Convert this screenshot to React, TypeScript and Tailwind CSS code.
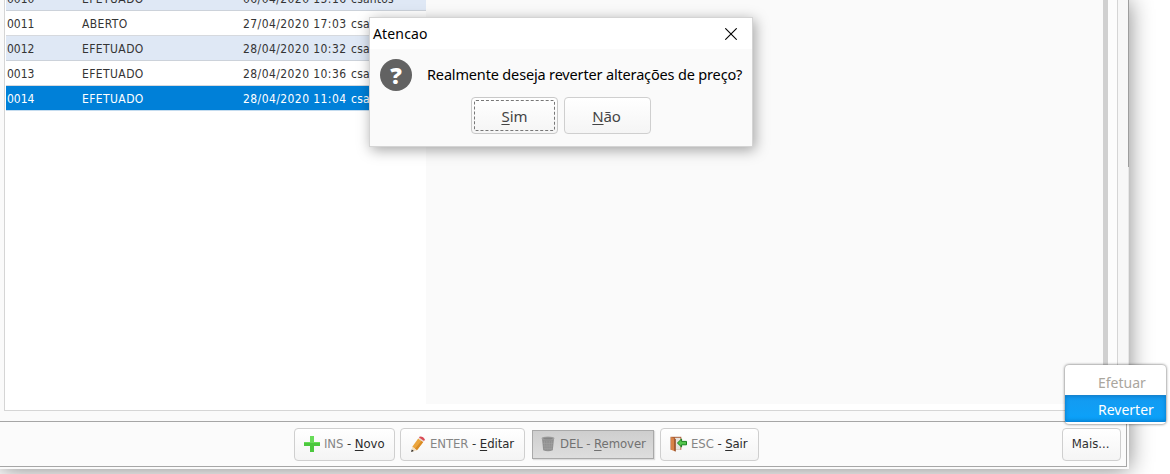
import type { ReactNode } from 'react';

type Row = { id: string; status: string; date: string; user: string };

const rows: Row[] = [
  { id: '0010', status: 'EFETUADO', date: '06/04/2020 15:16', user: 'csantos' },
  { id: '0011', status: 'ABERTO', date: '27/04/2020 17:03', user: 'csantos' },
  { id: '0012', status: 'EFETUADO', date: '28/04/2020 10:32', user: 'csantos' },
  { id: '0013', status: 'EFETUADO', date: '28/04/2020 10:36', user: 'csantos' },
  { id: '0014', status: 'EFETUADO', date: '28/04/2020 11:04', user: 'csantos' },
];

function PriceTable() {
  return (
    <div className="-mt-[14px] w-[421px] shrink-0 pl-px font-['DejaVu_Sans_Condensed','DejaVu_Sans',sans-serif] text-[12px] text-[#343434]">
      {rows.map((row, i) => {
        const selected = i === rows.length - 1;
        const tone = selected
          ? 'bg-[#0080d8] text-white border-[#c5dcef]'
          : i % 2 === 0
            ? 'bg-[#dfe8f5] border-[#ccd2da]'
            : 'bg-white border-[#d6d9de]';
        return (
          <div key={row.id} className={`flex h-[25px] items-center whitespace-nowrap border-b pt-px ${tone}`}>
            <span className="w-[76px] pl-px">{row.id}</span>
            <span className="w-[161px] tracking-[0.4px]">{row.status}</span>
            <span className="w-[108px] tracking-[0.42px]">{row.date}</span>
            <span className="tracking-[0.2px]">{row.user}</span>
          </div>
        );
      })}
    </div>
  );
}

function PlusIcon() {
  return (
    <svg width="16" height="16" viewBox="0 0 16 16">
      <path d="M6 0h4v6h6v4h-6v6H6v-6H0V6h6z" fill="#4cc83e" />
      <path d="M6 0h4v6h6v1H0V6h6z" fill="#68dc59" />
    </svg>
  );
}

function PencilIcon() {
  return (
    <svg width="16" height="16" viewBox="0 0 16 16">
      <path d="M2.3 10.8 8.2 2.4l5 3.6-6.3 8.2z" fill="#eba53c" />
      <path d="m5 12.7 6.6-8 1.6 1.3-6.3 8.2z" fill="#d98b25" />
      <path d="m8.2 2.4.8-1 5 3.6-.8 1z" fill="#ead9d0" />
      <path d="M9 1.4 9.8.4Q13.6.2 15 3.8L14 5z" fill="#d94b55" />
      <path d="m2.3 10.8 4.6 3.4L1.2 16z" fill="#f3dfc0" />
      <path d="m1.7 13.4 2.2 1.6-2.7 1z" fill="#252525" />
    </svg>
  );
}

function TrashIcon() {
  return (
    <svg width="14" height="16" viewBox="0 0 14 16">
      <path d="M1 2.5h12l-1.2 11.8Q7 16.4 2.2 14.3z" fill="#8f8f8f" />
      <path d="M3.3 4.5 4.2 14M5.8 5l.4 9.5M8.3 5 8 14.5M10.8 4.5 9.9 14M2 7.4h10M2.2 10h9.6M2.5 12.4h9" stroke="#a2a2a2" strokeWidth=".6" fill="none" />
      <ellipse cx="7" cy="2.4" rx="6.5" ry="1.9" fill="#a0a0a0" />
      <ellipse cx="7" cy="2.5" rx="4.7" ry="1" fill="#858585" />
    </svg>
  );
}

function ExitIcon() {
  return (
    <svg width="17" height="16" viewBox="0 0 17 16">
      <path d="M.5.8h10.8v13H.5z" fill="#a9603b" />
      <path d="M5 1.8h5.4v12H5z" fill="#e6e3de" />
      <path d="M1 1.1 5.5 3v12.6L1 13.7z" fill="#d88246" />
      <path d="M4.3 2.5 5.7 3v12.6l-1.4-.6z" fill="#8e4b2a" />
      <path d="m7.4 7 4.2-4v2.4h4.9v3.4h-4.9V11z" fill="#54c64c" stroke="#19831e" />
    </svg>
  );
}

function ToolButton({
  icon,
  shortcut,
  mnemonic,
  rest,
  className,
}: {
  icon: ReactNode;
  shortcut: string;
  mnemonic: string;
  rest: string;
  className: string;
}) {
  return (
    <button className={`flex h-[33px] items-center whitespace-nowrap rounded-[4px] border border-[#cfcfcf] bg-linear-to-b from-white to-[#f4f4f4] pl-[9px] tracking-[-0.08px] ${className}`}>
      {icon}
      <span className="ml-[4px] text-[#858585]">{shortcut}</span>
      <span className="whitespace-pre text-[#333]"> - </span>
      <span className="text-[#2b2b2b]">
        <u className="underline-offset-2">{mnemonic}</u>
        {rest}
      </span>
    </button>
  );
}

function Toolbar() {
  return (
    <div className="flex h-[46px] w-[1127px] items-center border-y border-r border-[#a6a6a6] bg-[#fbfbfb] pl-[294px] font-['DejaVu_Sans_Condensed','DejaVu_Sans',sans-serif] text-[13px]">
      <ToolButton icon={<PlusIcon />} shortcut="INS" mnemonic="N" rest="ovo" className="w-[101px]" />
      <ToolButton icon={<PencilIcon />} shortcut="ENTER" mnemonic="E" rest="ditar" className="ml-[5px] w-[125px]" />
      <button className="ml-[7px] flex h-[29px] w-[122px] items-center whitespace-nowrap border border-[#a9a9a9] bg-linear-to-b from-[#cecece] to-[#dedede] pl-[8px] tracking-[-0.08px] text-[#717171] shadow-[1px_1px_1px_#ddd]">
        <TrashIcon />
        <span className="ml-[5px]">
          DEL - <u className="underline-offset-2">R</u>emover
        </span>
      </button>
      <ToolButton icon={<ExitIcon />} shortcut="ESC" mnemonic="S" rest="air" className="ml-[6px] w-[99px]" />
      <button className="ml-[303px] h-[33px] w-[59px] shrink-0 rounded-[4px] border border-[#cfcfcf] bg-linear-to-b from-white to-[#f5f5f5] pr-[2px] text-[#303030]">
        Mais...
      </button>
    </div>
  );
}

function ConfirmDialog() {
  return (
    <div className="absolute left-[369px] top-[17px] h-[130px] w-[384px] border border-[#d4d4d4] bg-[#fafafa] font-['Noto_Sans',sans-serif] shadow-[2px_3px_13px_rgba(0,0,0,0.36)]">
      <div className="flex h-[31px] items-center justify-between bg-white pl-[3px] pr-[15px] text-[14px] text-black">
        <span className="tracking-[0.15px]">Atencao</span>
        <svg width="12" height="12" viewBox="0 0 12 12" stroke="#000" strokeWidth="1.1">
          <path d="m.3.3 11.4 11.4M11.7.3.3 11.7" />
        </svg>
      </div>
      <div className="flex h-[48px] items-center pl-[10px] pt-[4px]">
        <div className="flex size-8 items-center justify-center rounded-full bg-[#626262] font-['Open_Sans',sans-serif] text-[23px] font-extrabold leading-none text-white">
          ?
        </div>
        <span className="ml-[15px] whitespace-nowrap text-[14.5px] tracking-[-0.16px] text-black">Realmente deseja reverter alterações de preço?</span>
      </div>
      <div className="flex gap-[6px] pl-[101px] text-[15px] text-[#444]">
        <button className="flex h-[37px] w-[87px] rounded-[4px] border border-[#c8c8c8] bg-linear-to-b from-white to-[#f5f5f5] p-[2px]">
          <span className="flex h-full w-full items-center justify-center rounded-[2px] border border-dashed border-[#777] pt-[2px]">
            <u className="underline-offset-2">S</u>im
          </span>
        </button>
        <button className="h-[37px] w-[87px] rounded-[4px] border border-[#cfcfcf] bg-linear-to-b from-white to-[#f5f5f5] pr-[2px] pt-[2px] tracking-[-0.2px]">
          <u className="underline-offset-2">N</u>ão
        </button>
      </div>
    </div>
  );
}

function MoreMenu() {
  return (
    <div className="absolute left-[1065px] top-[365px] h-[59px] w-[101px] overflow-hidden rounded-[4px] bg-white pt-[5px] font-['Noto_Sans',sans-serif] text-[14px] shadow-[0_0_3px_rgba(0,0,0,0.65)]">
      <div className="flex h-[25px] items-center pl-[33px] text-[#aaa69e]">Efetuar</div>
      <div className="flex h-[27px] items-center border-y border-t-[#1784cf] border-b-[#0786db] bg-linear-to-b from-[#149af0] to-[#0aa2fa] pl-[33px] pt-px text-white shadow-[inset_0_0_4px_#0876c2]">
        Reverter
      </div>
    </div>
  );
}

export default function App() {
  return (
    <div className="relative h-[474px] w-[1170px] overflow-hidden bg-white">
      <div className="h-[469px] w-[1129px] bg-[#fafafa] shadow-[0_1px_22px_rgba(0,0,0,0.48)]">
        <div className="flex h-[421px]">
          <div className="ml-[4px] flex h-[411px] w-[1114px] shrink-0 overflow-hidden border-x border-b border-[#d5d5d5] bg-white">
            <PriceTable />
            <div className="h-[404px] w-[677px] shrink-0 bg-[#fafafa]" />
            <div className="h-full w-[5px] shrink-0 bg-[#d0d0d0]" />
            <div className="h-full w-[9px] shrink-0 bg-[#fcfcfc]" />
          </div>
          <div className="flex w-[11px] shrink-0 flex-col bg-[#f7f7f7]">
            <div className="h-[167px] border-r border-[#9d9d9d]" />
            <div className="grow border-r border-[#e6e6e6]" />
          </div>
        </div>
        <Toolbar />
      </div>
      <ConfirmDialog />
      <MoreMenu />
    </div>
  );
}
